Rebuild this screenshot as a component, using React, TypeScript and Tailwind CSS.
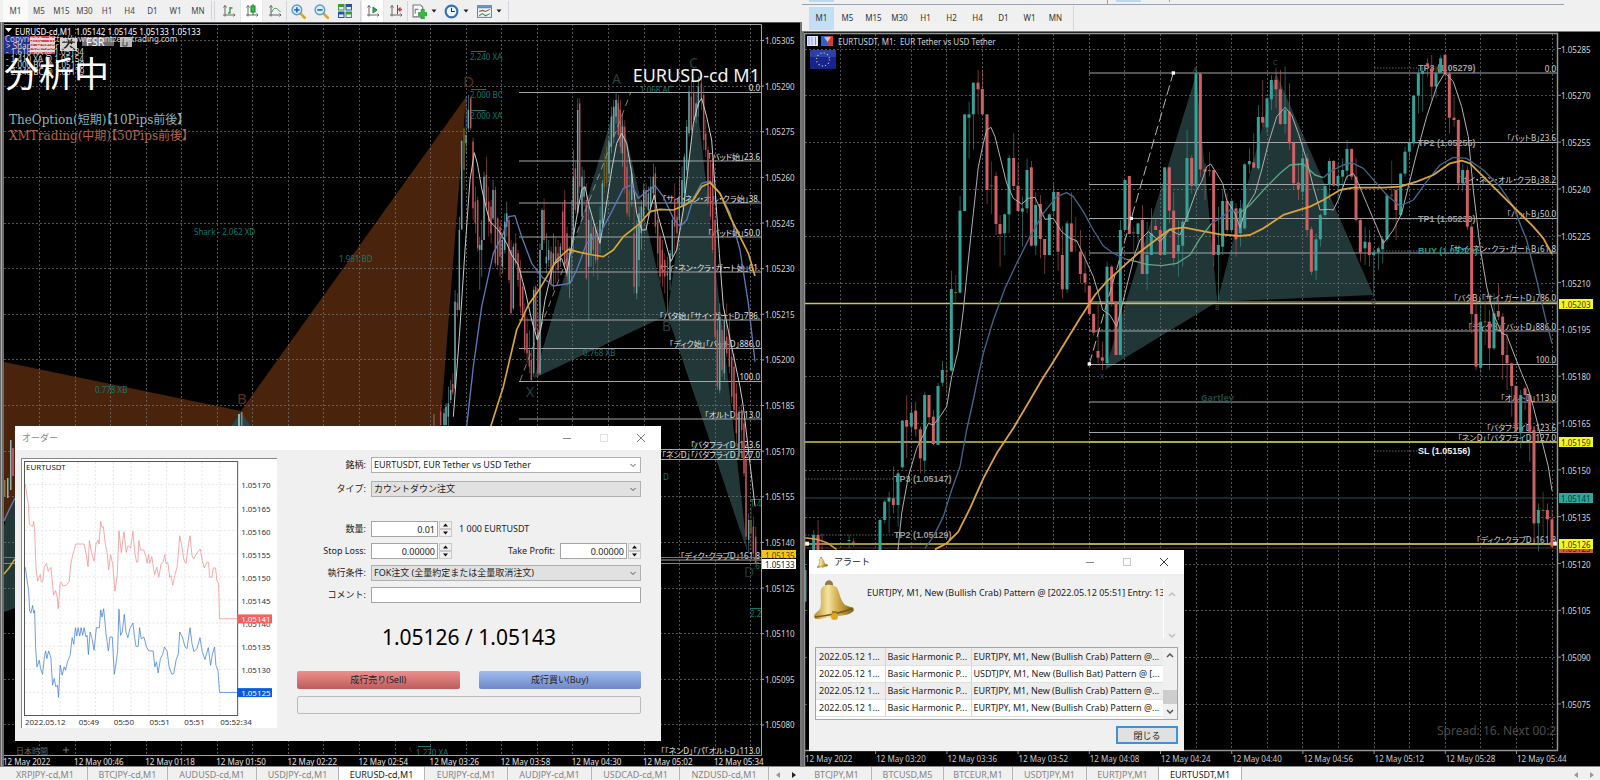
import type { ReactNode } from "react";

type Candle = [number, number, number, number, number, number];
type Point = [number, number];

// x, high, low, body top, body bottom, kind (0 down, 1 up, 2 doji)
// series are stored at three units per pixel
const eurusdCandles: Candle[] = [
  [2, 1160, 1220, 1175, 1215, 0], [12, 1165, 1220, 1180, 1215, 1], [18, 1150, 1220, 1160, 1215, 1],
  [25, 1100, 1220, 1150, 1190, 1], [32, 1080, 1150, 1110, 1140, 1], [38, 1060, 1125, 1092, 1118, 0],
  [45, 810, 1110, 845, 1105, 1], [52, 820, 890, 848, 870, 0], [58, 590, 870, 630, 870, 1],
  [65, 360, 630, 363, 628, 1], [72, 320, 510, 325, 450, 2], [78, 230, 400, 345, 370, 1],
  [85, 225, 335, 270, 325, 1], [92, 232, 330, 235, 325, 0], [99, 352, 600, 365, 565, 0],
  [106, 500, 640, 545, 610, 0], [113, 530, 695, 540, 685, 0], [119, 650, 810, 675, 690, 1],
  [125, 600, 770, 660, 690, 1], [132, 455, 660, 470, 660, 1], [139, 410, 560, 465, 555, 0],
  [146, 500, 650, 545, 605, 0], [153, 540, 670, 560, 640, 0], [159, 480, 600, 510, 595, 1],
  [166, 500, 740, 510, 730, 0], [173, 590, 750, 595, 735, 0], [180, 600, 770, 620, 710, 0],
  [187, 640, 760, 660, 740, 1], [194, 580, 700, 605, 690, 1], [200, 545, 650, 580, 620, 1],
  [207, 590, 790, 600, 780, 0], [213, 660, 885, 690, 880, 0], [220, 670, 870, 680, 865, 1],
  [227, 640, 740, 670, 730, 0], [234, 690, 800, 700, 780, 0], [241, 720, 880, 750, 860, 0],
  [248, 790, 900, 800, 890, 0], [254, 850, 1000, 880, 990, 0], [261, 890, 1030, 940, 1000, 0],
  [268, 930, 1060, 990, 1040, 0], [274, 990, 1085, 1020, 1080, 0], [281, 800, 1070, 810, 1060, 1],
  [287, 795, 940, 800, 930, 0], [294, 880, 1070, 930, 1060, 0], [300, 670, 1065, 690, 1060, 1],
  [306, 565, 690, 570, 690, 1], [312, 535, 670, 570, 660, 0], [319, 640, 760, 710, 730, 1],
  [326, 660, 740, 690, 720, 1], [333, 680, 800, 695, 790, 0], [340, 640, 810, 700, 740, 1],
  [347, 650, 790, 680, 730, 0], [354, 660, 780, 700, 750, 0], [361, 670, 740, 680, 725, 1],
  [368, 550, 700, 575, 690, 0], [374, 510, 740, 540, 740, 0], [381, 620, 800, 640, 770, 0],
  [388, 680, 835, 700, 790, 1], [395, 540, 780, 650, 700, 1], [400, 390, 700, 470, 650, 1],
  [406, 425, 580, 445, 570, 0], [413, 235, 580, 270, 580, 1], [419, 235, 520, 250, 500, 0],
  [426, 440, 600, 470, 590, 1], [432, 450, 560, 500, 530, 1], [439, 490, 780, 540, 775, 0],
  [446, 560, 900, 600, 740, 1], [453, 590, 740, 640, 700, 1], [460, 600, 770, 620, 690, 0],
  [467, 610, 730, 630, 720, 0], [473, 620, 780, 650, 720, 0], [480, 560, 700, 600, 660, 1],
  [487, 480, 620, 490, 610, 1], [493, 400, 520, 430, 500, 2], [500, 360, 500, 380, 490, 2],
  [507, 350, 480, 365, 460, 1], [514, 260, 400, 290, 380, 1], [521, 240, 370, 260, 350, 1],
  [528, 220, 310, 240, 290, 1], [535, 225, 350, 250, 345, 0], [541, 240, 400, 270, 380, 0],
  [547, 280, 440, 320, 400, 1], [554, 300, 520, 320, 500, 0], [561, 400, 590, 440, 580, 0],
  [568, 470, 600, 510, 590, 2], [575, 440, 560, 460, 540, 1], [582, 500, 820, 640, 800, 0],
  [590, 600, 838, 620, 820, 1], [597, 560, 800, 580, 720, 1], [604, 540, 690, 560, 640, 1],
  [611, 490, 600, 510, 590, 1], [618, 490, 580, 510, 560, 0], [625, 500, 590, 520, 570, 1],
  [632, 470, 580, 500, 560, 1], [640, 430, 540, 470, 520, 1], [646, 440, 640, 460, 620, 0],
  [653, 590, 740, 600, 700, 0], [660, 640, 790, 650, 770, 0], [667, 660, 800, 690, 760, 0],
  [674, 700, 820, 720, 770, 0], [682, 710, 880, 760, 766, 1], [690, 690, 810, 700, 780, 1],
  [697, 590, 720, 600, 710, 1], [704, 490, 700, 540, 620, 0], [711, 540, 690, 590, 640, 0],
  [718, 470, 620, 530, 600, 1], [726, 440, 560, 480, 560, 1], [733, 400, 540, 410, 520, 1],
  [740, 300, 460, 320, 450, 1], [747, 200, 350, 215, 340, 1], [754, 180, 340, 230, 330, 0],
  [761, 170, 320, 215, 300, 0], [768, 220, 310, 250, 290, 1], [775, 170, 290, 200, 260, 1],
  [784, 165, 270, 190, 240, 0], [791, 200, 390, 225, 360, 0], [797, 300, 410, 340, 390, 0],
  [804, 380, 560, 390, 550, 0], [811, 420, 600, 500, 590, 0], [818, 420, 700, 430, 690, 0],
  [825, 560, 960, 600, 950, 0], [832, 900, 1110, 930, 1100, 0], [839, 850, 1120, 890, 1110, 1],
  [846, 880, 1070, 930, 1050, 0], [853, 870, 1080, 900, 1060, 1], [860, 850, 1010, 950, 1000, 0],
  [868, 900, 1060, 940, 1040, 0], [875, 970, 1150, 1010, 1130, 0], [882, 1000, 1190, 1040, 1170, 0],
  [889, 1090, 1280, 1120, 1240, 0], [897, 1160, 1320, 1175, 1310, 1], [905, 1150, 1300, 1170, 1230, 0],
  [912, 1200, 1370, 1210, 1360, 0], [918, 1310, 1560, 1320, 1550, 0], [926, 1480, 1600, 1500, 1560, 1],
  [933, 1460, 1590, 1500, 1540, 2], [940, 1490, 1610, 1520, 1600, 0], [947, 1520, 1632, 1550, 1630, 0],
];

const eurtusdtCandles: Candle[] = [
  [15, 1700, 1805, 1710, 1805, 1], [41, 1590, 1660, 1605, 1660, 1], [54, 1560, 1660, 1605, 1660, 0],
  [66, 1600, 1655, 1632, 1634, 0], [147, 1605, 1645, 1620, 1622, 1], [160, 1615, 1640, 1625, 1627, 0],
  [240, 1555, 1660, 1560, 1660, 1], [254, 1500, 1570, 1505, 1560, 1], [267, 1475, 1600, 1493, 1505, 1],
  [280, 1400, 1540, 1495, 1515, 0], [294, 1415, 1580, 1420, 1515, 1], [307, 1260, 1405, 1262, 1402, 1],
  [320, 1185, 1375, 1260, 1280, 0], [334, 1210, 1300, 1238, 1280, 1], [347, 1205, 1310, 1232, 1288, 0],
  [361, 1280, 1420, 1288, 1375, 0], [374, 1175, 1420, 1185, 1382, 1], [387, 1185, 1270, 1185, 1252, 0],
  [400, 1230, 1335, 1250, 1332, 0], [414, 1148, 1335, 1158, 1335, 1], [427, 1083, 1160, 1110, 1148, 1],
  [440, 1090, 1180, 1112, 1114, 2], [454, 812, 1115, 867, 1112, 1], [467, 825, 910, 876, 878, 2],
  [480, 588, 880, 632, 878, 1], [494, 343, 635, 343, 633, 1], [507, 305, 475, 343, 353, 1],
  [520, 248, 448, 248, 343, 1], [534, 210, 343, 248, 268, 0], [547, 210, 343, 267, 343, 0],
  [561, 343, 612, 343, 570, 0], [574, 485, 642, 556, 558, 2], [588, 515, 705, 528, 672, 0],
  [600, 645, 800, 672, 702, 0], [614, 640, 765, 643, 700, 1], [627, 465, 700, 474, 643, 1],
  [641, 400, 570, 474, 558, 0], [654, 490, 634, 557, 633, 0], [667, 590, 740, 625, 635, 1],
  [681, 475, 640, 510, 625, 1], [694, 483, 740, 502, 737, 0], [707, 577, 765, 615, 737, 1],
  [721, 585, 775, 612, 717, 0], [734, 717, 822, 717, 765, 0], [748, 640, 765, 643, 765, 1],
  [761, 550, 650, 576, 633, 1], [774, 575, 812, 576, 755, 0], [787, 680, 895, 765, 868, 0],
  [801, 662, 878, 670, 868, 1], [814, 577, 755, 670, 755, 0], [827, 650, 755, 722, 724, 2],
  [841, 690, 850, 755, 822, 0], [855, 755, 878, 820, 848, 0], [868, 857, 942, 857, 942, 0],
  [881, 940, 1008, 942, 998, 0], [894, 910, 1090, 1053, 1073, 0], [907, 1025, 1110, 1072, 1082, 0],
  [921, 785, 1100, 800, 1090, 1], [935, 795, 920, 800, 907, 0], [948, 905, 1065, 905, 1065, 0],
  [961, 660, 1065, 690, 1065, 1], [975, 540, 690, 540, 690, 1], [988, 528, 702, 528, 702, 0],
  [1001, 680, 760, 697, 699, 2], [1014, 668, 760, 670, 702, 1], [1027, 615, 822, 660, 822, 0],
  [1041, 665, 870, 765, 822, 1], [1054, 625, 765, 700, 765, 1], [1067, 655, 690, 678, 690, 0],
  [1081, 680, 765, 690, 765, 0], [1094, 502, 765, 502, 765, 1], [1108, 502, 670, 502, 632, 0],
  [1121, 577, 800, 632, 774, 0], [1135, 660, 830, 735, 755, 1], [1148, 655, 800, 665, 737, 1],
  [1161, 390, 665, 474, 665, 1], [1175, 465, 580, 474, 558, 0], [1188, 205, 580, 220, 558, 1],
  [1201, 220, 530, 220, 508, 0], [1215, 490, 600, 508, 515, 0], [1228, 455, 530, 510, 512, 2],
  [1241, 510, 800, 510, 765, 0], [1255, 620, 900, 735, 765, 1], [1268, 570, 765, 603, 740, 1],
  [1281, 580, 700, 603, 690, 0], [1295, 600, 700, 603, 690, 1], [1308, 610, 770, 625, 718, 0],
  [1321, 600, 740, 625, 700, 1], [1334, 490, 690, 493, 685, 1], [1348, 445, 520, 483, 493, 1],
  [1361, 400, 505, 487, 503, 0], [1375, 315, 510, 351, 505, 1], [1388, 240, 380, 351, 368, 0],
  [1401, 290, 400, 295, 382, 1], [1414, 225, 330, 240, 298, 1], [1428, 205, 325, 240, 268, 0],
  [1441, 210, 375, 268, 372, 0], [1455, 200, 400, 330, 372, 1], [1468, 250, 450, 335, 430, 0],
  [1481, 425, 570, 428, 550, 0], [1495, 490, 600, 548, 568, 0], [1508, 430, 600, 475, 575, 1],
  [1521, 460, 710, 475, 690, 0], [1534, 680, 825, 688, 815, 0], [1548, 700, 840, 718, 812, 1],
  [1561, 640, 740, 645, 718, 1], [1575, 550, 650, 558, 645, 1], [1588, 475, 600, 483, 555, 1],
  [1601, 480, 560, 483, 557, 0], [1614, 490, 600, 528, 558, 1], [1628, 475, 570, 510, 530, 1],
  [1641, 420, 540, 447, 512, 1], [1655, 445, 540, 447, 530, 0], [1668, 475, 665, 530, 660, 0],
  [1681, 655, 785, 660, 758, 0], [1695, 680, 795, 725, 745, 1], [1708, 690, 800, 727, 765, 0],
  [1721, 745, 890, 757, 765, 1], [1735, 740, 810, 745, 757, 1], [1748, 710, 790, 718, 748, 1],
  [1761, 580, 725, 587, 718, 1], [1775, 482, 600, 584, 586, 2], [1788, 565, 720, 570, 630, 0],
  [1802, 518, 650, 521, 645, 1], [1815, 440, 530, 455, 521, 1], [1828, 415, 480, 428, 455, 1],
  [1841, 285, 440, 287, 430, 1], [1855, 205, 340, 220, 287, 1], [1868, 200, 335, 213, 222, 1],
  [1882, 175, 230, 190, 200, 0], [1895, 165, 300, 205, 260, 0], [1908, 200, 295, 220, 260, 1],
  [1922, 165, 220, 175, 218, 1], [1935, 160, 230, 165, 220, 0], [1948, 200, 400, 220, 353, 0],
  [1962, 290, 380, 353, 360, 0], [1975, 358, 570, 360, 550, 0], [1988, 490, 575, 510, 550, 1],
  [2002, 500, 690, 510, 680, 0], [2015, 670, 1000, 680, 942, 0], [2028, 900, 1110, 942, 1100, 0],
  [2042, 900, 1120, 965, 1103, 1], [2055, 880, 1035, 964, 966, 2], [2068, 930, 1110, 965, 1045, 0],
  [2082, 880, 1050, 940, 1045, 1], [2095, 850, 960, 933, 950, 0], [2108, 940, 1140, 950, 1065, 0],
  [2121, 1000, 1170, 1065, 1090, 0], [2135, 1088, 1250, 1090, 1158, 0], [2148, 1155, 1300, 1158, 1290, 0],
  [2162, 1170, 1345, 1185, 1300, 1], [2175, 1160, 1230, 1165, 1185, 0], [2189, 1180, 1385, 1185, 1295, 0],
  [2202, 1280, 1630, 1290, 1570, 0], [2215, 1510, 1655, 1530, 1570, 1], [2229, 1475, 1635, 1530, 1532, 2],
  [2242, 1510, 1610, 1530, 1558, 0], [2256, 1528, 1645, 1558, 1640, 0],
];

const eurusdFast: Point[] = [[40, 1190], [58, 950], [75, 690], [90, 480], [103, 398], [112, 430], [125, 505], [140, 570], [150, 605], [175, 630], [200, 670], [215, 705], [235, 735], [255, 810], [275, 900], [292, 960], [302, 930], [315, 840], [340, 735], [365, 715], [380, 760], [395, 680], [412, 580], [425, 510], [435, 500], [448, 560], [465, 620], [480, 670], [495, 580], [515, 450], [530, 370], [545, 340], [560, 370], [575, 460], [590, 580], [605, 630], [618, 630], [630, 570], [643, 525], [655, 590], [675, 660], [692, 725], [710, 690], [730, 570], [745, 440], [760, 310], [775, 250], [785, 235], [800, 290], [815, 360], [825, 500], [838, 700], [850, 860], [875, 980], [900, 1100], [910, 1160], [930, 1330], [945, 1458]];
const eurusdMid: Point[] = [[80, 1220], [100, 1040], [125, 860], [160, 700], [190, 640], [205, 590], [225, 587], [245, 650], [275, 730], [305, 770], [340, 798], [390, 790], [410, 750], [440, 670], [480, 640], [510, 585], [550, 505], [575, 495], [595, 535], [620, 515], [645, 497], [670, 530], [700, 595], [720, 620], [740, 600], [760, 535], [785, 490], [810, 483], [840, 520], [870, 580], [900, 690], [925, 850], [945, 1025]];
const eurusdSlow: Point[] = [[152, 1220], [190, 1100], [230, 930], [265, 855], [300, 805], [350, 720], [385, 688], [420, 697], [460, 705], [490, 710], [520, 690], [550, 650], [600, 610], [630, 575], [660, 568], [700, 570], [735, 555], [760, 540], [785, 500], [810, 488], [840, 520], [870, 590], [900, 650], [925, 700], [945, 768]];

const eurtFast: Point[] = [[294, 1650], [305, 1540], [325, 1430], [350, 1345], [370, 1305], [385, 1270], [400, 1275], [420, 1250], [440, 1220], [455, 1130], [475, 1050], [490, 930], [505, 780], [520, 640], [535, 500], [550, 430], [560, 390], [573, 382], [585, 410], [600, 470], [620, 550], [640, 595], [665, 612], [685, 595], [705, 592], [720, 625], [735, 658], [760, 655], [785, 695], [810, 715], [830, 722], [855, 775], [880, 830], [895, 880], [908, 930], [930, 945], [950, 980], [965, 920], [985, 840], [1005, 760], [1020, 720], [1045, 695], [1080, 725], [1110, 690], [1140, 705], [1165, 640], [1190, 570], [1205, 545], [1220, 500], [1232, 492], [1250, 520], [1268, 550], [1280, 600], [1305, 640], [1320, 683], [1340, 620], [1365, 580], [1385, 510], [1405, 430], [1430, 350], [1455, 322], [1475, 345], [1495, 400], [1520, 480], [1540, 560], [1560, 630], [1585, 628], [1600, 630], [1615, 600], [1640, 530], [1660, 520], [1675, 550], [1700, 610], [1730, 680], [1750, 730], [1780, 690], [1805, 640], [1825, 560], [1850, 460], [1880, 350], [1910, 260], [1935, 218], [1960, 245], [1985, 320], [2005, 410], [2020, 570], [2040, 740], [2060, 860], [2080, 940], [2105, 1000], [2120, 1005], [2145, 1070], [2165, 1120], [2185, 1168], [2200, 1220], [2225, 1320], [2245, 1400], [2256, 1472]];
const eurtMid: Point[] = [[375, 1645], [400, 1610], [430, 1550], [455, 1470], [480, 1400], [500, 1290], [520, 1200], [530, 1150], [550, 1060], [580, 960], [615, 865], [650, 790], [690, 710], [730, 640], [770, 590], [800, 578], [820, 590], [850, 635], [880, 690], [910, 738], [940, 760], [980, 778]];
const eurtMidInner: Point[] = [[980, 778], [1010, 785], [1040, 793], [1085, 797], [1130, 790], [1170, 765], [1200, 715], [1235, 670]];
const eurtMidLink: Point[] = [[1235, 670], [1268, 650], [1290, 630], [1320, 638]];
const eurtMidInner2: Point[] = [[1320, 638], [1350, 615], [1400, 560], [1440, 520], [1470, 495], [1510, 492], [1545, 525], [1570, 533]];
const eurtMidEnd: Point[] = [[1570, 533], [1590, 515], [1630, 495], [1655, 488], [1690, 505], [1730, 550], [1760, 585], [1800, 618], [1840, 600], [1880, 545], [1920, 495], [1960, 472], [2000, 475], [2050, 510], [2100, 560], [2140, 620], [2180, 720], [2210, 840], [2235, 950], [2256, 1030]];
const eurtSlow: Point[] = [[405, 1648], [440, 1630], [475, 1595], [510, 1525], [550, 1435], [590, 1360], [640, 1285], [690, 1200], [725, 1140], [760, 1085], [800, 1020], [840, 955], [885, 885], [920, 845], [980, 790], [1020, 755], [1060, 725], [1110, 688], [1150, 682], [1200, 692], [1260, 703], [1320, 708], [1350, 705], [1390, 685], [1450, 645], [1530, 620], [1570, 600], [1620, 570], [1660, 563], [1750, 563], [1800, 560], [1850, 545], [1900, 525], [1950, 490], [1985, 482], [2010, 490], [2050, 530], [2100, 580], [2150, 630], [2200, 680], [2230, 715], [2256, 762]];

const askTicks: Point[] = [[73, 190], [78, 225], [82, 250], [85, 310], [95, 317], [98, 302], [101, 325], [105, 440], [110, 482], [118, 462], [121, 484], [126, 482], [130, 440], [137, 428], [142, 452], [150, 440], [155, 490], [158, 524], [164, 510], [169, 530], [172, 565], [178, 490], [181, 484], [186, 496], [195, 495], [205, 484], [210, 430], [216, 402], [225, 370], [250, 370], [256, 400], [262, 438], [266, 360], [272, 395], [280, 422], [286, 370], [292, 358], [295, 370], [300, 302], [304, 320], [308, 318], [314, 370], [320, 400], [324, 448], [330, 402], [336, 430], [343, 512], [350, 460], [355, 330], [362, 396], [370, 333], [377, 395], [382, 375], [390, 382], [397, 332], [402, 390], [408, 425], [412, 424], [415, 360], [420, 388], [430, 388], [436, 408], [440, 428], [444, 402], [448, 428], [454, 408], [462, 462], [469, 440], [475, 470], [482, 430], [488, 425], [493, 402], [497, 430], [502, 425], [508, 470], [512, 465], [517, 494], [523, 465], [530, 440], [534, 400], [538, 345], [546, 385], [550, 415], [557, 428], [563, 380], [569, 345], [575, 405], [580, 415], [588, 400], [600, 385], [606, 420], [612, 442], [620, 425], [625, 425], [628, 470], [635, 470], [639, 442], [646, 442], [650, 480], [655, 490], [658, 595], [712, 595]];
const bidTicks: Point[] = [[73, 440], [77, 470], [83, 510], [86, 572], [90, 578], [95, 555], [98, 578], [101, 570], [104, 680], [108, 740], [115, 720], [119, 745], [125, 762], [130, 715], [134, 692], [138, 715], [143, 692], [150, 712], [155, 795], [160, 775], [165, 800], [170, 795], [173, 832], [178, 735], [184, 765], [190, 740], [194, 750], [200, 725], [208, 705], [214, 652], [219, 672], [224, 622], [228, 647], [232, 622], [237, 647], [241, 622], [246, 645], [250, 622], [256, 650], [259, 645], [263, 703], [268, 635], [274, 655], [280, 690], [287, 622], [296, 622], [300, 568], [304, 590], [309, 565], [316, 640], [323, 692], [328, 650], [335, 650], [341, 762], [347, 725], [351, 690], [355, 566], [360, 645], [365, 635], [371, 582], [376, 635], [382, 652], [388, 625], [397, 608], [402, 650], [406, 678], [413, 678], [417, 622], [422, 655], [430, 650], [438, 680], [445, 692], [458, 692], [463, 740], [468, 725], [473, 758], [480, 715], [487, 702], [492, 680], [500, 692], [506, 740], [514, 762], [520, 760], [527, 720], [534, 700], [538, 635], [546, 650], [554, 680], [560, 685], [569, 622], [575, 670], [581, 694], [590, 685], [599, 652], [606, 695], [614, 718], [624, 682], [631, 735], [637, 700], [643, 680], [647, 735], [653, 750], [658, 817], [712, 817]];

const range = (count: number) => Array.from({ length: count }, (_, i) => i);
const toPoints = (points: Point[]) => points.map((p) => p.join(",")).join(" ");

function Line(props: { points: Point[]; color: string; width: number }) {
  return (
    <polyline
      points={toPoints(props.points)}
      fill="none"
      stroke={props.color}
      strokeWidth={props.width}
      strokeLinejoin="round"
    />
  );
}

function Candles(props: { data: Candle[]; colors: string[]; width: number }) {
  return (
    <g>
      {props.data.map(([x, high, low, top, bottom, kind]) => (
        <g key={x} fill={props.colors[kind]}>
          <rect x={x - 1} y={high} width={2.5} height={low - high} opacity={0.65} />
          <rect
            x={x - props.width / 2}
            y={top}
            width={props.width}
            height={Math.max(bottom - top, 3)}
          />
        </g>
      ))}
    </g>
  );
}

function Grid(props: {
  x0: number;
  stepX: number;
  countX: number;
  y0: number;
  stepY: number;
  countY: number;
  left: number;
  right: number;
  top: number;
  bottom: number;
}) {
  return (
    <g stroke="#6f7276" strokeWidth={1} strokeDasharray="2 2" opacity={0.75}>
      {range(props.countX).map((i) => {
        const x = Math.round(props.x0 + i * props.stepX) + 0.5;
        return <line key={x} x1={x} x2={x} y1={props.top} y2={props.bottom} />;
      })}
      {range(props.countY).map((i) => {
        const y = Math.round(props.y0 + i * props.stepY) + 0.5;
        return <line key={y} x1={props.left} x2={props.right} y1={y} y2={y} />;
      })}
    </g>
  );
}

function T(props: {
  x: number;
  y: number;
  children: ReactNode;
  size?: number;
  color?: string;
  end?: boolean;
  className?: string;
}) {
  return (
    <text
      x={props.x}
      y={props.y}
      fontSize={props.size ?? 8}
      fill={props.color ?? "#d4d4d4"}
      textAnchor={props.end ? "end" : "start"}
      dominantBaseline="central"
      className={props.className}
    >
      {props.children}
    </text>
  );
}

const leftLevels: [number, string][] = [
  [92.5, "0.0"],
  [161, "「バッド始」23.6"],
  [203, "「サイ・ネン・オル・クラ始」38."],
  [237, "「バッド始」50.0"],
  [272, "サイ・ネン・クラ・ガート始」61."],
  [320, "「バタ始」「サイ・ガートD」786."],
  [348.5, "「ディク始」「バットD」886.0"],
  [381.5, "100.0"],
  [419, "「オルトD」113.0"],
  [449.5, "「バタフライD」123.6"],
  [459.5, "「ネンD」「バタフライD」127.0"],
  [560, "「ディク・クラブD」161.8"],
  [755.5, "「「ネンD」「パ「オルトD」113.0"],
];

const tealNotes: [number, number, string][] = [
  [470, 56, "2.240 XA"],
  [470, 94, "2.000 BC"],
  [470, 115, "2.000 XA"],
  [194, 231, "Shark - 2.062 XD"],
  [339, 258, "1.981 BD"],
  [95, 389, "0.778 XB"],
  [640, 89, "1.068 AC"],
  [583, 352, "0.768 XB"],
  [692, 445, "2."],
  [663, 476, "D"],
  [750, 503, "1.4"],
  [753, 565, ".6"],
  [750, 613, "2.2"],
  [416, 752, "1.270 XA"],
];

function LeftChart() {
  const times = ["2022", "00:46", "01:18", "01:50", "02:22", "02:54", "03:26", "03:58", "04:30", "05:02", "05:34"];
  const prices = ["305", "290", "275", "260", "245", "230", "215", "200", "185", "170", "155", "140", "125", "110", "095", "080"];

  return (
    <svg
      viewBox="0 22 802 744"
      preserveAspectRatio="xMinYMin slice"
      className="block w-full h-full bg-black [font-feature-settings:'palt']"
    >
      <rect x={0} y={22} width={4} height={744} fill="#6b6b6b" />
      <rect x={1} y={22} width={1} height={744} fill="#a8a8a8" />
      <polygon points="4,362 241,411 466,97 440,430 15,540 4,520" fill="#4a230c" />
      <polygon points="241,412 230,428 252,428" fill="#1c4c50" />
      <polygon points="4,526 15,500 15,608 4,612" fill="#223738" />
      <g transform="translate(440 20) scale(0.33333)" fill="#223738">
        <polygon points="282,1075 532,235 682,885" />
        <polygon points="682,885 770,240 922,1595" />
      </g>
      <Grid x0={39} stepX={35.56} countX={21} y0={40} stepY={45.63} countY={16} left={4} right={761} top={24} bottom={755} />

      {times.map((time, i) => (
        <T key={time} x={3 + i * 71.1} y={761.5} color="#e4e4e4">
          12 May {time}
        </T>
      ))}
      {prices.map((price, i) => (
        <T key={price} x={765} y={40.5 + i * 45.63}>
          1.05{price}
        </T>
      ))}

      <T x={463} y={81} size={15} color="#5a3015">D</T>
      <T x={237} y={398} size={15} color="#5a3015">B</T>
      <T x={612} y={78} size={14} color="#2b3f40">A</T>
      <T x={689} y={62} size={14} color="#2b3f40">C</T>
      <T x={526} y={391} size={14} color="#2b3f40">X</T>
      <T x={662} y={325} size={14} color="#2b3f40">B</T>
      <T x={744} y={571} size={14} color="#143c3a">D</T>
      {tealNotes.map(([x, y, label]) => (
        <T key={label + y} x={x} y={y} color="#10776d">
          {label}
        </T>
      ))}
      <path d="M411 747c-2 1-1 4 1 5" fill="none" stroke="#5a3015" />
      <g stroke="#10776d">
        <line x1={471} x2={486} y1={51.5} y2={51.5} />
        <line x1={471} x2={486} y1={89.5} y2={89.5} />
        <line x1={471} x2={486} y1={110.5} y2={110.5} />
        <line x1={418} x2={431} y1={746.5} y2={746.5} />
        <line x1={750} x2={761} y1={499.5} y2={499.5} />
        <line x1={750} x2={761} y1={608.5} y2={608.5} />
      </g>

      {leftLevels.map(([y, label]) => (
        <g key={y}>
          <line x1={519} x2={761} y1={y} y2={y} stroke="#a3a6a8" strokeWidth={1} />
          <T x={760} y={y - 5} end color="#e0e0e0">
            {label}
          </T>
        </g>
      ))}
      <line x1={4} x2={761} y1={557.5} y2={557.5} stroke="#8b7c35" />
      <line x1={4} x2={761} y1={563.5} y2={563.5} stroke="#7d8890" />

      <g transform="translate(440 20) scale(0.33333)">
        <Candles data={eurusdCandles} colors={["#b9545a", "#6ba5a6", "#6b5d23"]} width={4.5} />
        <line x1={240} y1={1083} x2={572} y2={218} stroke="#9a9d9e" strokeWidth={2.5} strokeDasharray="20 14" />
        <Line points={eurusdFast} color="#c9cccc" width={3} />
        <Line points={eurusdMid} color="#5c79b8" width={4} />
        <Line points={eurusdSlow} color="#d9a92f" width={5} />
      </g>
      <g>
        <rect x={238} y={414} width={2} height={14} fill="#8fb5b5" />
        <rect x={241} y={412} width={1.5} height={14} fill="#c96a6a" />
        <rect x={433} y={414} width={2} height={14} fill="#6f4a38" />
        <rect x={4} y={480} width={1.5} height={16} fill="#8a7c4a" />
        <rect x={7} y={478} width={1.5} height={20} fill="#8fb5b5" />
        <rect x={10} y={440} width={1.5} height={50} fill="#8fb5b5" />
        <rect x={12} y={448} width={2} height={28} fill="#b9545a" />
        <polyline points="4,521 9,510 15,498" fill="none" stroke="#5c79b8" strokeWidth={1.5} />
        <polyline points="4,574 9,568 15,559" fill="none" stroke="#d9a92f" strokeWidth={1.5} />
      </g>

      <path d="M4 24.5H761.5V755.5H4" fill="none" stroke="#a0a3a5" />
      <line x1={4} x2={802} y1={22.5} y2={22.5} stroke="#555" />
      {prices.map((price, i) => (
        <rect key={price} x={761} y={40 + i * 45.63} width={3} height={1} fill="#a0a3a5" />
      ))}
      <rect x={762} y={550} width={34} height={8} fill="#f5c518" />
      <T x={765} y={555} color="#5a4700">1.05135</T>
      <rect x={762} y={559} width={34} height={10} fill="#fff" />
      <T x={765} y={564} color="#222">1.05133</T>

      <g>
        <rect x={4} y={36} width={26} height={18} fill="#23308c" />
        {range(5).map((i) => (
          <rect key={i} x={30} y={36 + i * 4} width={25} height={2} fill="#d44654" />
        ))}
        {range(4).map((i) => (
          <rect key={i} x={30} y={38 + i * 4} width={25} height={2} fill="#e4dcdc" />
        ))}
        <rect x={60} y={38} width={17} height={13} fill="#d2d2d2" />
        <path d="M62 42h13M67 39l5 5M72 39l-6 8M62 50l5-4M75 50l-5-4" stroke="#222" strokeWidth={1.5} />
        <rect x={82} y={37} width={32} height={9} fill="#6f6f6f" />
        <rect x={120} y={37} width={12} height={10} fill="#b5b5b5" />
        <path d="M123 38v8h4v-5" stroke="#444" fill="none" />
        <T x={86} y={41} size={11} color="#fff">FSR</T>
      </g>
      <path d="M5 28h7l-3.500 4z" fill="#fff" />
      <T x={15} y={31} color="#fff">EURUSD-cd,M1&nbsp; 1.05142 1.05145 1.05133 1.05133</T>
      <T x={5} y={38}>Copyright - http://www.pointzero-trading.com</T>
      <T x={6} y={45}>&gt; Shark Bat:er</T>
      <T x={6} y={51}>- 1.618 XA @ 1.05134</T>
      <T x={6} y={58}>- 1.410 XA @ 1.05154</T>
      <T x={6} y={64}>- 2.000 BC @ 1.05138</T>
      <T x={6} y={71}>- 2.240 BC @ 1.05119</T>
      <T x={4} y={73} size={35} color="#fff">分析中</T>
      <g className="font-['DejaVu_Serif','Noto_Sans_CJK_JP',serif]">
        <T x={9} y={120} size={12} color="#93b3b5">TheOption(短期)【10Pips前後】</T>
        <T x={9} y={136} size={12} color="#b4644f">XMTrading(中期)【50Pips前後】</T>
      </g>
      <T x={760} y={75} size={18} end color="#f2f2f2">EURUSD-cd M1</T>
      <T x={16} y={750} color="#666">日本時間</T>
      <path d="M63 750h6M66 747v6" stroke="#777" />
      <rect x={800} y={22} width={2} height={744} fill="#777" />
    </svg>
  );
}

const rightLevels: [number, string][] = [
  [73, "0.0"],
  [142.5, "「バットB」23.6"],
  [184.5, "「サイ・ネン・オル・クラB」38.2"],
  [218.5, "「バットB」50.0"],
  [253, "「サイ・ネン・クラ・ガートB」61.8"],
  [302, "「バタB」「サイ・ガートD」786.0"],
  [331, "「ディクB」「バットD」886.0"],
  [364.5, "100.0"],
  [402, "「オルトD」113.0"],
  [432.5, "「バタフライD」123.6"],
  [442, "「ネンD」「バタフライD」127.0"],
  [544, "「ディク・クラブD」161.8"],
];

const targets: [number, number, string, string][] = [
  [1418, 68, "TP3 (1.05279)", "#9d9d9d"],
  [1418, 143, "TP2 (1.05255)", "#9d9d9d"],
  [1418, 219, "TP1 (1.05230)", "#9d9d9d"],
  [1418, 251, "BUY (1.05220)", "#239a90"],
  [1418, 451, "SL (1.05156)", "#f0f0f0"],
  [894, 479, "TP3 (1.05147)", "#9d9d9d"],
  [894, 535, "TP2 (1.05129)", "#9d9d9d"],
];

function PriceTag(props: { y: number; color: string; text: string; children: ReactNode }) {
  return (
    <g>
      <rect x={1559} y={props.y - 5} width={34} height={10} fill={props.color} />
      <T x={1561} y={props.y} color={props.text}>
        {props.children}
      </T>
    </g>
  );
}

function RightChart() {
  const times = ["2022", "03:20", "03:36", "03:52", "04:08", "04:24", "04:40", "04:56", "05:12", "05:28", "05:44"];
  const prices = ["285", "270", "255", "240", "225", "210", "195", "180", "165", "150", "135", "120", "105", "090", "075"];

  return (
    <svg
      viewBox="802 31 798 735"
      preserveAspectRatio="xMinYMin slice"
      className="block w-full h-full bg-black [font-feature-settings:'palt']"
    >
      <clipPath id="plot">
        <rect x={804} y={33} width={753} height={718} />
      </clipPath>
      <g transform="translate(800 0) scale(0.33333)" fill="#213636">
        <polygon points="915,1110 1188,225 1252,905" />
        <polygon points="1252,905 1428,220 1720,885" />
      </g>
      <Grid x0={839.5} stepX={35.61} countX={21} y0={48.5} stepY={46.82} countY={15} left={805} right={1557} top={34} bottom={750} />

      {rightLevels.map(([y, label]) => (
        <g key={y}>
          <line x1={1089} x2={1557} y1={y} y2={y} stroke="#a3a6a8" />
          <T x={1556} y={y - 5} end>
            {label}
          </T>
        </g>
      ))}
      <g stroke="#cdc84c" strokeWidth={1.5}>
        <line x1={805} x2={1557} y1={303.5} y2={303.5} />
        <line x1={805} x2={1557} y1={442} y2={442} />
        <line x1={805} x2={1557} y1={544} y2={544} />
      </g>
      <line x1={805} x2={1557} y1={498} y2={498} stroke="#1f5553" />
      <line x1={805} x2={1557} y1={548} y2={548} stroke="#5e3330" />

      {targets.map(([x, y, label, color]) => (
        <g key={label}>
          <line
            x1={x === 894 ? 805 : 1374}
            x2={x}
            y1={y}
            y2={y}
            stroke="#8d8d8d"
            strokeDasharray="1.500 1.500"
            opacity={0.7}
          />
          <T x={x} y={y} size={9} color={color} className="font-['Liberation_Sans',sans-serif] font-bold">
            {label}
          </T>
        </g>
      ))}
      <T x={1201} y={397} size={9} color="#1f4444" className="font-bold">Gartley</T>
      <T x={1193} y={69} size={7} color="#3a4a4a">A</T>
      <T x={1100} y={376} size={7} color="#3a4a4a">X</T>
      <T x={1215} y={307} size={7} color="#3a4a4a">B</T>
      <T x={1273} y={62} size={7} color="#3a4a4a">C</T>
      <T x={1371} y={301} size={7} color="#3a4a4a">D</T>

      <g transform="translate(800 0) scale(0.33333)">
        <Candles data={eurtusdtCandles} colors={["#cf6064", "#35a399", "#7d6328"]} width={9} />
        <line x1={868} y1={1092} x2={1120} y2={218} stroke="#b4b4b4" strokeWidth={3} strokeDasharray="30 12" />
        <Line points={eurtFast} color="#b0b0b0" width={3} />
        <Line points={eurtMid} color="#44668c" width={4} />
        <Line points={eurtMidInner} color="#5da886" width={4} />
        <Line points={eurtMidLink} color="#44668c" width={4} />
        <Line points={eurtMidInner2} color="#5da886" width={4} />
        <Line points={eurtMidEnd} color="#44668c" width={4} />
        <Line points={eurtSlow} color="#d9a23a" width={5.5} />
        <Line points={[[14, 1613], [50, 1618], [80, 1628], [110, 1648]]} color="#d9a23a" width={4.5} />
        <g fill="#fff">
          <rect x={1115} y={214} width={10} height={10} />
          <rect x={989} y={650} width={10} height={10} />
          <rect x={863} y={1087} width={10} height={10} />
          <rect x={15} y={1625} width={12} height={12} fill="#fff9c0" />
          <rect x={2260} y={1625} width={12} height={12} fill="#fff9c0" />
        </g>
      </g>

      <g clipPath="url(#plot)">
        <T x={1437} y={730} size={12} color="#4c4c4c">Spread: 16. Next 00:26</T>
      </g>
      <path d="M804.500 766V33.500H1557.500V750.500H804" fill="none" stroke="#8f9294" strokeWidth={1.5} />
      <rect x={802} y={31} width={2} height={735} fill="#6b6b6b" />
      <rect x={802} y={31} width={798} height={1} fill="#777" />
      {times.map((time, i) => (
        <g key={time}>
          <rect x={804 + i * 71.2} y={750} width={1} height={4} fill="#8f9294" />
          <T x={805 + i * 71.2} y={758} color="#c9c9c9">
            12 May {time}
          </T>
        </g>
      ))}
      {prices.map((price, i) => (
        <g key={price}>
          <rect x={1558} y={48 + i * 46.82} width={3} height={1} fill="#8f9294" />
          <T x={1561} y={49 + i * 46.82}>1.05{price}</T>
        </g>
      ))}
      <PriceTag y={548} color="#cf5b50" text="#5c1010">1.05125</PriceTag>
      <PriceTag y={304} color="#f7f520" text="#333">1.05203</PriceTag>
      <PriceTag y={442} color="#f7f520" text="#333">1.05159</PriceTag>
      <PriceTag y={544} color="#f7f520" text="#333">1.05126</PriceTag>
      <PriceTag y={498} color="#2fa79d" text="#0b3a36">1.05141</PriceTag>

      <rect x={807} y={36} width={11} height={10} fill="#dfe3fb" />
      <path d="M809 37v8M812 37v8" stroke="#8f9cf0" />
      <path d="M815.500 37v8" stroke="#e06f6f" />
      <rect x={821} y={36} width={6} height={10} fill="#2c5fd6" />
      <rect x={827} y={36} width={6} height={10} fill="#d8392f" />
      <path d="M824 37h7l-3.500 5z" fill="#c9c9c9" />
      <T x={838} y={41.5}>EURTUSDT, M1:&nbsp; EUR Tether vs USD Tether</T>
      <rect x={810} y={50} width={26} height={19} rx={1} fill="#16248c" />
      <rect x={810} y={50} width={26} height={7} fill="#3a55b5" opacity={0.6} />
      <circle cx={823} cy={59.500} r={6.500} fill="none" stroke="#d9d58a" strokeWidth={1.3} strokeDasharray="1 2.400" />
    </svg>
  );
}

function Sep() {
  return <span className="w-px h-5 bg-gray-300" />;
}

function ToolButton(props: { title: string; active?: boolean; children: ReactNode }) {
  return (
    <button
      aria-label={props.title}
      data-active={props.active}
      className="w-[23px] h-[22px] flex items-center justify-center data-[active=true]:bg-white data-[active=true]:border-x data-[active=true]:border-gray-200"
    >
      {props.children}
    </button>
  );
}

function Caret() {
  return (
    <svg viewBox="0 0 6 4" className="w-[6px] h-1">
      <path d="M0.500 0.500h5l-2.500 3z" fill="#222" />
    </svg>
  );
}

function Axes(props: { children: ReactNode }) {
  return (
    <svg viewBox="0 0 14 14" className="w-[14px] h-[14px]" fill="none" stroke="#666">
      <path d="M3 1.500v11M1 11h12M1.500 3.500L3 1.500l1.500 2M11.500 9.500L13 11l-1.500 1.500" />
      {props.children}
    </svg>
  );
}

function LeftToolbar() {
  const frames: [string, string][] = [
    ["M1", "w-[25px]"],
    ["M5", "w-[22px]"],
    ["M15", "w-[23px]"],
    ["M30", "w-[23px]"],
    ["H1", "w-[22px]"],
    ["H4", "w-[23px]"],
    ["D1", "w-[23px]"],
    ["W1", "w-[23px]"],
    ["MN", "w-[22px]"],
  ];

  return (
    <div className="h-[22px] bg-[#f0f0f0] flex items-center pl-[3px] overflow-hidden">
      {frames.map(([label, width]) => (
        <button
          key={label}
          data-active={label === "M1"}
          className={`${width} h-[22px] text-[8px] text-[#444] data-[active=true]:bg-[#fafafa]`}
        >
          {label}
        </button>
      ))}
      <span className="w-1 h-5 ml-[2px] mr-[2px] border-x border-gray-300" />
      <ToolButton title="Bar chart">
        <Axes>
          <path d="M8 9.500V3M8 4h2.500M6 9h2" stroke="#2f9e3f" strokeWidth={1.400} />
        </Axes>
      </ToolButton>
      <ToolButton title="Candlesticks" active>
        <Axes>
          <path d="M8 0v11" stroke="#1d7f2d" />
          <rect x={6} y={2} width={4} height={6} fill="#35c24d" stroke="#1d7f2d" />
        </Axes>
      </ToolButton>
      <ToolButton title="Line chart">
        <Axes>
          <path d="M3.500 8.500C6 3 8 3 12.500 8" stroke="#3f8f4d" />
        </Axes>
      </ToolButton>
      <Sep />
      {["in", "out"].map((kind) => (
        <ToolButton key={kind} title={`Zoom ${kind}`}>
          <svg viewBox="0 0 14 14" className="w-[15px] h-[15px]" fill="none">
            <path d="M9 9l4 4" stroke="#d9a92f" strokeWidth={2.500} strokeLinecap="round" />
            <circle cx={5.500} cy={5.500} r={4.500} fill="#d9ecfb" stroke="#5a9bd4" strokeWidth={1.300} />
            <path d="M3 5.500h5" stroke="#2469b0" strokeWidth={1.500} />
            {kind === "in" ? <path d="M5.500 3v5" stroke="#2469b0" strokeWidth={1.500} /> : null}
          </svg>
        </ToolButton>
      ))}
      <ToolButton title="Tile windows">
        <svg viewBox="0 0 14 14" className="w-[14px] h-[14px]">
          <path d="M0 0h6.500v6.500H0zM7.500 7.500H14V14H7.500z" fill="#3b9c2f" />
          <path d="M7.500 0H14v6.500H7.500zM0 7.500h6.500V14H0z" fill="#2453ad" />
          <path d="M1 3h4.500v2.500H1zM8.500 3H13v2.500H8.500zM1 10.500h4.500V13H1zM8.500 10.500H13V13H8.500z" fill="#dfeefa" />
        </svg>
      </ToolButton>
      <span className="w-1" />
      <Sep />
      <ToolButton title="Auto scroll" active>
        <Axes>
          <path d="M7 3l4 3-4 3z" fill="#35b24d" stroke="#1d7f2d" />
        </Axes>
      </ToolButton>
      <ToolButton title="Chart shift">
        <Axes>
          <path d="M8.500 1v9" stroke="#2b5f9e" />
          <path d="M13 5.500H9.500M11.500 3.500l-2 2 2 2" stroke="#c7432f" strokeWidth={1.300} />
        </Axes>
      </ToolButton>
      <Sep />
      <ToolButton title="Indicators">
        <svg viewBox="0 0 14 14" className="w-[15px] h-[15px]">
          <path d="M1 1h7l2 2v9H1z" fill="#fff" stroke="#777" />
          <path d="M3 9V5h3" stroke="#777" fill="none" />
          <path d="M8.500 5h3v3H14v3h-2.500v3h-3v-3H6V8h2.500z" fill="#2ec23a" stroke="#158022" strokeWidth={0.500} />
        </svg>
      </ToolButton>
      <Caret />
      <span className="w-[3px]" />
      <ToolButton title="Periods">
        <svg viewBox="0 0 14 14" className="w-[15px] h-[15px]">
          <circle cx={7} cy={7} r={5.500} fill="#eef6fd" stroke="#2f73ba" strokeWidth={2} />
          <path d="M7 3.500V7h3" stroke="#333" fill="none" />
        </svg>
      </ToolButton>
      <Caret />
      <span className="w-1" />
      <ToolButton title="Templates">
        <svg viewBox="0 0 14 14" className="w-[15px] h-[15px]" fill="none">
          <rect x={0.500} y={1.500} width={13} height={11} fill="#eef6fd" stroke="#5a8cc4" />
          <path d="M1 3h12" stroke="#5a8cc4" strokeWidth={2} />
          <path d="M2 7l3-1 3 1 4-2" stroke="#a3502f" />
          <path d="M2 11l3-2 3 2 4-2" stroke="#3f8f4d" />
        </svg>
      </ToolButton>
      <Caret />
      <span className="w-[6px]" />
      <Sep />
    </div>
  );
}

function RightToolbar() {
  const frames = ["M1", "M5", "M15", "M30", "H1", "H2", "H4", "D1", "W1", "MN"];

  return (
    <div className="h-[31px] bg-[#f0f0f0]">
      <div className="h-[5px] mr-9 border-b border-gray-400 flex items-start pl-[7px]">
        <span className="w-[25px] h-[2px] bg-[#b9d9f2]" />
        <span className="w-px h-1 ml-[273px] bg-gray-400" />
        <span className="w-[25px] h-[2px] ml-2 bg-[#b9d9f2]" />
        <span className="w-px h-[2px] ml-7 bg-gray-400" />
      </div>
      <div className="h-[26px] flex items-center pl-[7px]">
        {frames.map((label) => (
          <button
            key={label}
            data-active={label === "M1"}
            className="w-[25px] mr-px h-[23px] text-[8px] text-[#333] data-[active=true]:bg-[#c2e0f5]"
          >
            {label}
          </button>
        ))}
        <span className="w-px h-6 ml-1 bg-gray-300" />
      </div>
    </div>
  );
}

function Tab(props: { active?: boolean; children: ReactNode }) {
  return (
    <a
      href="#chart"
      data-active={props.active}
      className="text-center text-[9px] leading-[15px] text-[#858585] border-r border-[#b5b5b5] whitespace-nowrap data-[active=true]:bg-white data-[active=true]:text-[#222]"
    >
      {props.children}
    </a>
  );
}

function TabArrows(props: { dim?: boolean }) {
  return (
    <div className="flex justify-end items-center gap-3 pr-[6px]">
      <svg viewBox="0 0 4 6" className="w-1 h-[6px]"><path d="M4 0v6L0 3z" fill="#999" /></svg>
      <svg viewBox="0 0 4 6" className="w-1 h-[6px]"><path d="M0 0v6l4-3z" fill={props.dim ? "#999" : "#222"} /></svg>
    </div>
  );
}

function Field(props: { label: string; id?: string; children: ReactNode }) {
  return (
    <div className="h-4 flex items-center gap-[5px]">
      <label htmlFor={props.id} className="w-[69px] shrink-0 text-right whitespace-nowrap">
        {props.label}
      </label>
      {props.children}
    </div>
  );
}

function Select(props: { id: string; value: string; white?: boolean }) {
  return (
    <div className="relative flex-1 h-4">
      <select
        id={props.id}
        data-white={props.white}
        className="w-full h-full px-[2px] appearance-none border border-[#b0b0b0] bg-[#e1e1e1] data-[white=true]:bg-white"
      >
        <option>{props.value}</option>
      </select>
      <svg viewBox="0 0 8 5" className="absolute right-1 top-[6px] w-2 h-[5px]" fill="none" stroke="#555">
        <path d="M1.500 1L4 3.500 6.500 1" />
      </svg>
    </div>
  );
}

function Stepper(props: { id: string; value: string }) {
  return (
    <div className="flex h-4 gap-px">
      <input
        id={props.id}
        defaultValue={props.value}
        className="w-[67px] h-full pr-[2px] text-right bg-white border border-[#a5a5a5]"
      />
      <div className="w-[13px] flex flex-col">
        {["M2 4.500h5l-2.500-3z", "M2 1.500h5l-2.500 3z"].map((d, i) => (
          <button
            key={d}
            type="button"
            aria-label={i === 0 ? "Increase" : "Decrease"}
            className="flex-1 flex items-center justify-center border border-[#c9c9c9]"
          >
            <svg viewBox="0 0 9 6" className="w-[9px] h-[6px]"><path d={d} fill="#111" /></svg>
          </button>
        ))}
      </div>
    </div>
  );
}

function WindowButtons(props: { dim?: boolean }) {
  return (
    <div data-dim={props.dim} className="flex items-center gap-[27px] text-[#333] data-[dim=true]:text-[#777]">
      <button aria-label="Minimize">
        <svg viewBox="0 0 10 10" className="block w-[10px] h-[10px]"><path d="M1 5.500h8" stroke="#888" /></svg>
      </button>
      <button aria-label="Maximize" disabled>
        <svg viewBox="0 0 10 10" className="block w-[10px] h-[10px]">
          <rect x={1.500} y={1.500} width={7} height={7} fill="none" stroke={props.dim ? "#e2e2e2" : "#c9c9c9"} />
        </svg>
      </button>
      <button aria-label="Close">
        <svg viewBox="0 0 10 10" className="block w-[10px] h-[10px]"><path d="M1 1l8 8M9 1l-8 8" stroke="currentColor" /></svg>
      </button>
    </div>
  );
}

function TickChart() {
  const prices = ["170", "165", "160", "155", "150", "145", "140", "135", "130"];
  const times: [number, string][] = [[24, "2022.05.12"], [78, "05:49"], [113, "05:50"], [149, "05:51"], [184, "05:51"], [220, "05:52:34"]];

  return (
    <svg viewBox="21 458 256 270" className="w-64 h-[270px] shrink-0 bg-white border-t border-l border-[#888]">
      <g stroke="#e6e6e6" strokeDasharray="2 2">
        {range(11).map((i) => (
          <line key={i} x1={41.500 + i * 17.8} x2={41.500 + i * 17.8} y1={461} y2={715} />
        ))}
        {range(10).map((i) => (
          <line key={i} x1={24} x2={237} y1={483.500 + i * 23.2} y2={483.500 + i * 23.2} />
        ))}
      </g>
      <rect x={23.500} y={460.500} width={214} height={255} fill="none" stroke="#555" />
      <g transform="translate(0 420) scale(0.33333)">
        <Line points={askTicks} color="#f28a8a" width={2.2} />
        <Line points={bidTicks} color="#3b78dc" width={2.2} />
      </g>
      <T x={25} y={466} color="#222">EURTUSDT</T>
      {prices.map((price, i) => (
        <T key={price} x={241} y={484 + i * 23.2} color="#333">1.05{price}</T>
      ))}
      {times.map(([x, time]) => (
        <T key={x} x={x} y={722} color="#333">{time}</T>
      ))}
      <rect x={237} y={614} width={35} height={9} fill="#f75f5f" />
      <T x={241} y={618} color="#fff">1.05141</T>
      <rect x={237} y={688} width={35} height={9} fill="#0a5be0" />
      <T x={241} y={692} color="#fff">1.05125</T>
    </svg>
  );
}

function OrderDialog() {
  return (
    <section className="absolute left-[15px] top-[426px] w-[646px] h-[315px] bg-[#f0f0f0] text-[9px] text-[#222] flex flex-col">
      <header className="h-6 bg-white flex items-center justify-between pl-[7px] pr-[15px]">
        <h2 className="text-[#888] text-[9px] leading-3 -mt-px">オーダー</h2>
        <WindowButtons dim />
      </header>
      <div className="flex gap-5 pl-[6px] pr-5 pt-2">
        <TickChart />
        <form className="flex-1 -mt-px flex flex-col">
          <Field label="銘柄:" id="symbol">
            <Select id="symbol" value="EURTUSDT, EUR Tether vs USD Tether" white />
          </Field>
          <div className="h-2" />
          <Field label="タイプ:" id="type">
            <Select id="type" value="カウントダウン注文" />
          </Field>
          <div className="h-6" />
          <div className="flex flex-col gap-[6px]">
            <Field label="数量:" id="volume">
              <Stepper id="volume" value="0.01" />
              <span className="pl-[2px]">1 000 EURTUSDT</span>
            </Field>
            <Field label="Stop Loss:" id="sl">
              <Stepper id="sl" value="0.00000" />
              <label htmlFor="tp" className="ml-auto">Take Profit:</label>
              <Stepper id="tp" value="0.00000" />
            </Field>
            <Field label="執行条件:" id="filling">
              <Select id="filling" value="FOK注文 (全量約定または全量取消注文)" />
            </Field>
            <Field label="コメント:" id="comment">
              <input id="comment" className="flex-1 h-full bg-white border border-[#a5a5a5]" />
            </Field>
          </div>
          <p className="mt-5 text-[21px] leading-7 text-center text-black">1.05126 / 1.05143</p>
          <div className="mt-5 flex gap-[19px]">
            <button type="button" className="flex-1 h-[18px] rounded-xs bg-linear-to-b from-[#ee8f8f] to-[#bd5c5c]">
              成行売り(Sell)
            </button>
            <button type="button" className="flex-1 h-[18px] rounded-xs bg-linear-to-b from-[#a4bbef] to-[#6f88c4]">
              成行買い(Buy)
            </button>
          </div>
          <div className="mt-[7px] h-[18px] border border-[#bbb] rounded-xs" />
        </form>
      </div>
    </section>
  );
}

function Bell(props: { className: string }) {
  return (
    <svg viewBox="0 0 40 40" className={props.className}>
      <defs>
        <linearGradient id="brass" x1="0" x2="1">
          <stop offset="0" stopColor="#b38a2c" />
          <stop offset="0.350" stopColor="#f6e3a0" />
          <stop offset="0.650" stopColor="#c9a23f" />
          <stop offset="1" stopColor="#80601a" />
        </linearGradient>
      </defs>
      <path d="M11 4c1-5 7-5 8 0v4h-8z" fill="#8f7a42" />
      <path d="M7 10c1-6 12-7 16-2 3 5 3 12 8 17l8 3c3 3-3 6-8 7L6 39c-4 1-8-1-5-5l5-5c2-6 0-13 1-19z" fill="url(#brass)" />
      <path d="M1 37c9-1 27-4 38-9" stroke="#7a5a14" strokeWidth={1.500} fill="none" />
      <path d="M18 31h5v4h-5z" fill="#a87c14" />
      <circle cx={20.500} cy={36.500} r={3.500} fill="#e0a81e" />
    </svg>
  );
}

function Chevron(props: { up?: boolean; color: string }) {
  return (
    <svg viewBox="0 0 8 5" className="w-2 h-[5px]" fill="none" stroke={props.color} strokeWidth={1.500}>
      <path d={props.up ? "M1 4L4 1l3 3" : "M1 1l3 3 3-3"} />
    </svg>
  );
}

function AlertDialog() {
  const rows = [
    "EURTJPY, M1, New (Bullish Crab) Pattern @...",
    "USDTJPY, M1, New (Bullish Bat) Pattern @ [...",
    "EURTJPY, M1, New (Bullish Crab) Pattern @...",
    "EURTJPY, M1, New (Bullish Crab) Pattern @...",
  ];

  return (
    <section className="absolute left-[7px] top-[550px] w-[375px] h-[201px] bg-[#f0f0f0] text-[9px] text-[#222] flex flex-col">
      <header className="h-6 bg-white flex items-center pl-2 pr-[15px]">
        <Bell className="w-[11px] h-[11px]" />
        <h2 className="ml-[6px] mr-auto text-[9px]">アラート</h2>
        <WindowButtons />
      </header>
      <div className="flex px-[5px] pt-[6px]">
        <Bell className="w-10 h-10" />
        <p className="flex-1 min-w-0 pt-[6px] pl-[13px] whitespace-nowrap overflow-hidden">
          EURTJPY, M1, New (Bullish Crab) Pattern @ [2022.05.12 05:51] Entry: 13
        </p>
        <div className="h-[58px] w-4 shrink-0 border-l border-white flex flex-col items-center justify-between pt-3">
          <Chevron up color="#c0c0c0" />
          <Chevron color="#c0c0c0" />
        </div>
      </div>
      <div className="mx-[6px] mt-[9px] h-[73px] border border-[#a5a5a5] bg-white flex">
        <table className="flex-1 table-fixed w-[346px] self-start">
          <colgroup>
            <col className="w-[69px]" />
            <col className="w-[86px]" />
            <col />
          </colgroup>
          <tbody>
            {rows.map((row, i) => (
              <tr key={i} className="h-[17px] odd:bg-[#ededed] border-b border-[#e0e0e0] whitespace-nowrap">
                <td className="pl-[3px] border-r border-[#d6d6d6]">2022.05.12 1...</td>
                <td className="pl-[2px] border-r border-[#d6d6d6]">Basic Harmonic P...</td>
                <td className="pl-[2px]">{row}</td>
              </tr>
            ))}
          </tbody>
        </table>
        <div className="w-[14px] bg-[#f0f0f0] flex flex-col items-center justify-between py-[5px]">
          <Chevron up color="#555" />
          <span className="w-full h-[14px] mt-auto mb-[5px] bg-[#cdcdcd]" />
          <Chevron color="#555" />
        </div>
      </div>
      <button className="ml-auto mr-[6px] mt-[6px] w-[62px] h-[18px] border-2 border-[#3f92d6] bg-[#e1e1e1] leading-none">
        閉じる
      </button>
    </section>
  );
}

export default function App() {
  const leftTabs = ["XRPJPY-cd,M1", "BTCJPY-cd,M1", "AUDUSD-cd,M1", "USDJPY-cd,M1", "EURUSD-cd,M1", "EURJPY-cd,M1", "AUDJPY-cd,M1", "USDCAD-cd,M1", "NZDUSD-cd,M1"];
  const rightTabs = ["BTCJPY,M1", "BTCUSD,M5", "BTCEUR,M1", "USDTJPY,M1", "EURTJPY,M1", "EURTUSDT,M1"];

  return (
    <main className="h-screen grid grid-cols-[401fr_399fr] bg-black overflow-hidden font-['Noto_Sans','Noto_Sans_CJK_JP',sans-serif]">
      <section className="relative min-w-0 min-h-0 flex flex-col">
        <LeftToolbar />
        <div className="flex-1 min-h-0">
          <LeftChart />
        </div>
        <nav className="h-[14px] pl-[3px] bg-[#f0f0f0] border-t border-[#8a8a8a] grid grid-cols-[85px_80px_89px_82px_86px_83px_84px_88px_89px_1fr]">
          {leftTabs.map((tab) => (
            <Tab key={tab} active={tab === "EURUSD-cd,M1"}>{tab}</Tab>
          ))}
          <TabArrows />
        </nav>
        <OrderDialog />
      </section>
      <section className="relative min-w-0 min-h-0 flex flex-col">
        <RightToolbar />
        <div className="flex-1 min-h-0">
          <RightChart />
        </div>
        <nav className="h-[14px] bg-[#f0f0f0] border-t border-[#8a8a8a] grid grid-cols-[70px_72px_69px_74px_72px_83px_1fr]">
          {rightTabs.map((tab) => (
            <Tab key={tab} active={tab === "EURTUSDT,M1"}>{tab}</Tab>
          ))}
          <TabArrows dim />
        </nav>
        <AlertDialog />
      </section>
    </main>
  );
}
